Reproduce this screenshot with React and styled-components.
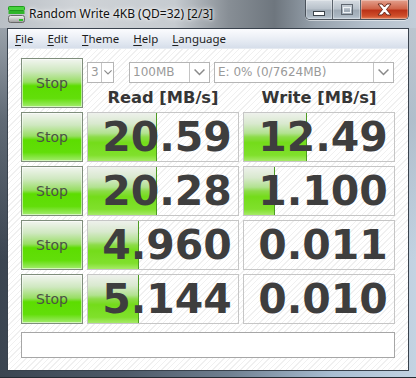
import React from 'react'
import styled, {createGlobalStyle} from 'styled-components'

const GlobalStyle = createGlobalStyle`
  html, body {
    margin: 0;
    padding: 0;
    background: #6b7783;
  }
  body {
    width: 416px;
    height: 378px;
    overflow: hidden;
  }
`

// Data
const results = [
  ['20.59', '12.49'],
  ['20.28', '1.100'],
  ['4.960', '0.011'],
  ['5.144', '0.010']
]

const menus = ['File', 'Edit', 'Theme', 'Help', 'Language']

// log scale, 30px per decade starting at 0.1 MB/s
const barWidth = (text) => {
  const w = Math.log10(parseFloat(text) * 10) * 30
  return Math.max(0, Math.min(150, Math.round(w)))
}

// Window chrome
const Window = styled.div`
  box-sizing: border-box;
  width: 416px;
  height: 378px;
  display: flex;
  flex-direction: column;
  padding: 0 7px 6px 7px;
  background:
    linear-gradient(to bottom, rgba(190, 197, 204, 0.85) 0, rgba(150, 160, 170, 0.4) 120px, rgba(60, 70, 82, 0) 260px),
    linear-gradient(to right, #3b4551 0%, #4e5a68 30%, #6f7f90 55%, #a9bed2 80%, #c3d3e2 100%);
  border-bottom: 1px solid #252c34;
`

const TitleBar = styled.div`
  height: 28px;
  display: flex;
  align-items: flex-start;
  margin: 0 -7px;
  padding: 0 7px;
  background: linear-gradient(to right, #b9bfc5 0%, #cfd3d7 18%, #c6cbd0 42%, #878e95 55%, #6e767e 66%, #97a2ad 76%, #b3bfcb 88%, #c2cdd8 100%);
`

const AppIcon = styled.svg`
  width: 17px;
  height: 17px;
  margin: 6px 0 0 1px;
  flex: none;
`

const TitleText = styled.div`
  margin: 6px 0 0 4px;
  font-family: 'Noto Sans', sans-serif;
  font-size: 12px;
  line-height: 16px;
  color: #111;
  text-shadow: 0 0 6px #fff, 0 0 3px #fff;
  white-space: nowrap;
`

const CaptionGroup = styled.div`
  margin-left: auto;
  display: flex;
  height: 19px;
  border: 1px solid #4a525b;
  border-top: none;
  border-radius: 0 0 5px 5px;
  overflow: hidden;
  box-shadow: 0 1px 0 rgba(255, 255, 255, 0.5);
`

const CaptionButton = styled.div`
  width: ${p => p.$w}px;
  display: flex;
  align-items: center;
  justify-content: center;
  border-left: ${p => (p.$first ? 'none' : '1px solid #5a626b')};
  box-shadow: inset 0 0 0 1px rgba(255, 255, 255, 0.3);
  background: ${p => p.$close
    ? 'linear-gradient(to bottom, #e3a08d 0%, #d0664b 45%, #bb3318 55%, #cf4f2b 85%, #e3845f 100%)'
    : 'linear-gradient(to bottom, #d6dce2 0%, #b9c2cb 45%, #9faab5 55%, #aab6c1 85%, #c1ccd6 100%)'};
`

// Frame & menu
const Frame = styled.div`
  flex: 1;
  display: flex;
  flex-direction: column;
  border: 1px solid #39424d;
  min-height: 0;
`

const MenuBar = styled.div`
  height: 20px;
  box-sizing: border-box;
  display: flex;
  align-items: center;
  gap: 14px;
  padding: 0 0 1px 7px;
  background: linear-gradient(to bottom, #fbfcfe 0%, #eef1f7 40%, #e2e8f1 70%, #d6deea 100%);
  border-bottom: 1px solid #e4e9f0;
`

const MenuItem = styled.span`
  font-family: 'Noto Sans', sans-serif;
  font-size: 11.5px;
  color: #1e1e1e;
  u {
    text-decoration-thickness: 1px;
    text-underline-offset: 2px;
  }
`

// Client area
const Client = styled.div`
  flex: 1;
  padding: 9px 13px 9px;
  display: grid;
  grid-template-columns: 62px 152px 152px;
  grid-template-rows: repeat(5, 50px) 30px;
  column-gap: 4px;
  row-gap: 4px;
  background: repeating-linear-gradient(135deg, #ffffff 0 3px, #f0f0f0 3px 4px);
`

const StopButton = styled.div`
  box-sizing: border-box;
  display: flex;
  align-items: center;
  justify-content: center;
  border: 1px solid #7f8e7c;
  box-shadow: inset 0 0 0 1px rgba(255, 255, 255, 0.55);
  background: linear-gradient(to bottom, #f2f5f0 0%, #cfe8c0 25%, #98de64 48%, #5cdd00 56%, #62de0a 82%, #a4ec70 100%);
  font-family: 'DejaVu Sans', sans-serif;
  font-size: 14px;
  color: #4b5345;
`

const Controls = styled.div`
  grid-column: 2 / span 2;
  display: grid;
  grid-template-columns: 152px 152px;
  column-gap: 4px;
  align-content: start;
`

const SelectRow = styled.div`
  grid-column: 1 / -1;
  display: flex;
  margin-top: 4px;
  height: 21px;
`

const SelectBox = styled.div`
  box-sizing: border-box;
  width: ${p => p.$w}px;
  margin-right: ${p => p.$gap || 0}px;
  display: flex;
  border: 1px solid #b5b5b5;
  background: #fff;
`

const SelectText = styled.div`
  flex: 1;
  padding-left: 3px;
  font-family: 'DejaVu Sans', sans-serif;
  font-size: 12px;
  line-height: 19px;
  color: #9a9a9a;
  white-space: nowrap;
  overflow: hidden;
`

const SelectArrow = styled.div`
  width: ${p => p.$w}px;
  display: flex;
  align-items: center;
  justify-content: center;
  border-left: 1px solid #c4c4c4;
`

const Heading = styled.div`
  margin-top: 5px;
  text-align: center;
  font-family: 'DejaVu Sans', sans-serif;
  font-weight: bold;
  font-size: 16.3px;
  line-height: 19px;
  color: #353535;
`

const ValueCell = styled.div`
  position: relative;
  box-sizing: border-box;
  border: 1px solid #c6c6c6;
  overflow: hidden;
  display: flex;
  align-items: center;
  justify-content: center;
  padding-left: 8px;
`

const Bar = styled.div`
  position: absolute;
  left: 0;
  top: 0;
  bottom: 0;
  box-sizing: border-box;
  border-right: 1px solid #4c9b22;
  background: linear-gradient(to bottom, #eef1ec 0%, #d9e9cf 22%, #b2e290 42%, #8cdc48 50%, #74dc1a 62%, #80e02c 88%, #a6ea68 100%);
`

const Value = styled.span`
  position: relative;
  font-family: 'DejaVu Sans', sans-serif;
  font-weight: bold;
  font-size: 41px;
  line-height: 48px;
  color: #3e3e3e;
`

const StatusBar = styled.div`
  grid-column: 1 / -1;
  margin-top: 4px;
  border: 1px solid #a6a6a6;
  background: #fff;
`

const Chevron = ({size}) => (
  <svg width={size} height={size * 0.6} viewBox='0 0 10 6'>
    <polyline points='0.5,0.5 5,5 9.5,0.5' fill='none' stroke='#8a8a8a' strokeWidth='1.4' />
  </svg>
)

const Select = ({w, gap, arrow, chevron, children}) => (
  <SelectBox $w={w} $gap={gap}>
    <SelectText>{children}</SelectText>
    <SelectArrow $w={arrow}><Chevron size={chevron} /></SelectArrow>
  </SelectBox>
)

const Result = ({value}) => {
  const w = barWidth(value)
  return (
    <ValueCell>
      {w > 0 && <Bar style={{width: w}} />}
      <Value>{value}</Value>
    </ValueCell>
  )
}

export default function App () {
  return (
    <>
      <GlobalStyle />
      <Window>
        <TitleBar>
          <AppIcon viewBox='0 0 17 17'>
            <defs>
              <linearGradient id='drv' x1='0' y1='0' x2='0' y2='1'>
                <stop offset='0' stopColor='#f4f4f4' />
                <stop offset='1' stopColor='#9c9c9c' />
              </linearGradient>
            </defs>
            <rect x='0.5' y='0.5' width='16' height='4' rx='1' fill='#46d23e' stroke='#219a1e' />
            <rect x='0.5' y='5' width='16' height='3' fill='#2fb52a' />
            <rect x='0.5' y='9.5' width='16' height='7' rx='2' fill='url(#drv)' stroke='#6a6a6a' />
            <rect x='11' y='13' width='4' height='2' fill='#2ec32a' />
          </AppIcon>
          <TitleText>Random Write 4KB (QD=32) [2/3]</TitleText>
          <CaptionGroup>
            <CaptionButton $w={26} $first>
              <svg width='12' height='14' viewBox='0 0 12 14'>
                <rect x='0.5' y='8.5' width='11' height='4' fill='#fff' stroke='#3c434a' />
              </svg>
            </CaptionButton>
            <CaptionButton $w={27}>
              <svg width='12' height='11' viewBox='0 0 12 11'>
                <rect x='0.5' y='0.5' width='11' height='10' fill='none' stroke='#5f6770' />
                <rect x='2.5' y='3.5' width='7' height='5' fill='none' stroke='#eef2f5' />
              </svg>
            </CaptionButton>
            <CaptionButton $w={47} $close>
              <svg width='15' height='13' viewBox='0 0 15 13'>
                <path d='M1 1 H5 L7.5 4 L10 1 H14 L9.5 6.5 L14 12 H10 L7.5 9 L5 12 H1 L5.5 6.5 Z' fill='#fff' stroke='#6b2a1c' strokeWidth='1' strokeLinejoin='round' />
              </svg>
            </CaptionButton>
          </CaptionGroup>
        </TitleBar>
        <Frame>
          <MenuBar>
            {menus.map(m => (
              <MenuItem key={m}><u>{m[0]}</u>{m.slice(1)}</MenuItem>
            ))}
          </MenuBar>
          <Client>
            <StopButton>Stop</StopButton>
            <Controls>
              <SelectRow>
                <Select w={27} gap={15} arrow={11} chevron={8}>3</Select>
                <Select w={81} gap={4} arrow={19} chevron={11}>100MB</Select>
                <Select w={180} arrow={19} chevron={11}>E: 0% (0/7624MB)</Select>
              </SelectRow>
              <Heading>Read [MB/s]</Heading>
              <Heading>Write [MB/s]</Heading>
            </Controls>
            {results.map((row, i) => (
              <React.Fragment key={i}>
                <StopButton>Stop</StopButton>
                {row.map((v, j) => <Result key={j} value={v} />)}
              </React.Fragment>
            ))}
            <StatusBar />
          </Client>
        </Frame>
      </Window>
    </>
  )
}
